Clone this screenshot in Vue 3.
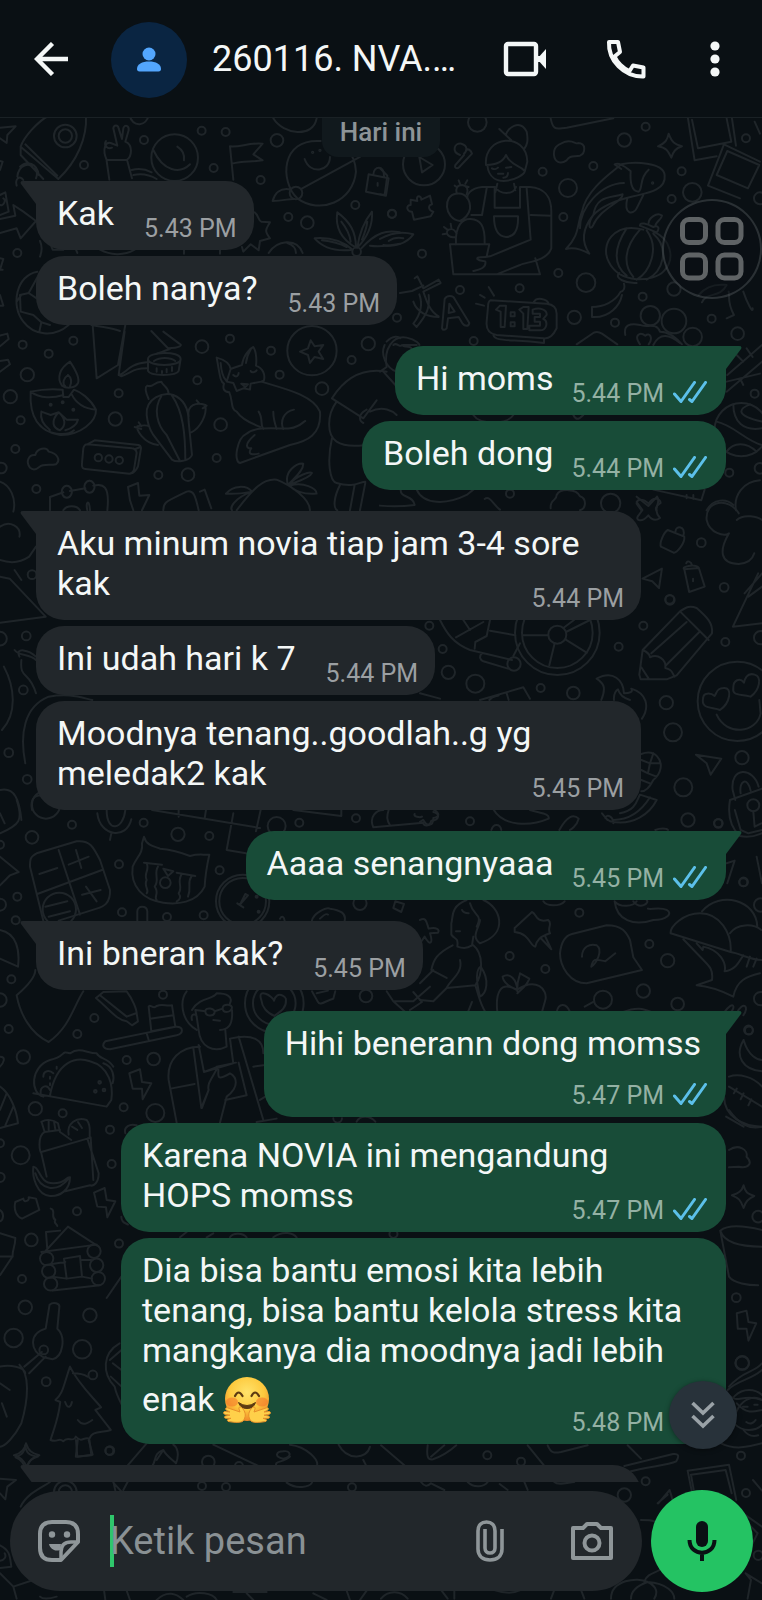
<script setup>
import { ref } from 'vue'

const draft = ref('')

const groups = [
  {
    side: 'in',
    items: [
      { text: 'Kak', time: '5.43 PM', fit: 'row' },
      { text: 'Boleh nanya?', time: '5.43 PM', fit: 'row' }
    ]
  },
  {
    side: 'out',
    items: [
      { text: 'Hi moms', time: '5.44 PM', fit: 'row' },
      { text: 'Boleh dong', time: '5.44 PM', fit: 'row' }
    ]
  },
  {
    side: 'in',
    items: [
      { text: 'Aku minum novia tiap jam 3-4 sore kak', time: '5.44 PM', fit: 'tucked' },
      { text: 'Ini udah hari k 7', time: '5.44 PM', fit: 'row' },
      { text: 'Moodnya tenang..goodlah..g yg meledak2 kak', time: '5.45 PM', fit: 'tucked' }
    ]
  },
  { side: 'out', items: [{ text: 'Aaaa senangnyaaa', time: '5.45 PM', fit: 'row' }] },
  { side: 'in', items: [{ text: 'Ini bneran kak?', time: '5.45 PM', fit: 'row' }] },
  {
    side: 'out',
    items: [
      { text: 'Hihi benerann dong momss', time: '5.47 PM', fit: 'below' },
      { text: 'Karena NOVIA ini mengandung HOPS momss', time: '5.47 PM', fit: 'tucked' },
      {
        text: 'Dia bisa bantu emosi kita lebih tenang, bisa bantu kelola stress kita mangkanya dia moodnya jadi lebih enak',
        hug: true,
        time: '5.48 PM',
        fit: 'tucked'
      }
    ]
  },
  { side: 'in', items: [{ text: '', time: '', fit: 'tucked' }] }
]

/* Wallpaper: each patch has its own origin and scale, with bubbles [x, y, r] and line art */
const third = 'scale(0.3333)'
const patches = [
  {
    at: `translate(0 115) ${third}`,
    dots: [[605, 47, 12], [677, 51, 12], [432, 75, 12], [252, 150, 12], [831, 76, 19], [641, 159, 12], [782, 195, 12], [1066, 270, 12], [865, 306, 12], [922, 323, 19], [1176, 297, 12], [52, 414, 12], [68, 689, 12], [220, 677, 12], [146, 716, 12], [82, 779, 20], [31, 845, 20], [356, 835, 12], [346, 912, 20], [62, 916, 12], [46, 1002, 12], [606, 695, 19], [690, 671, 12], [592, 796, 12], [813, 707, 12], [839, 779, 12], [966, 821, 19], [662, 929, 19], [650, 1029, 12], [475, 1080, 12], [564, 1079, 19], [109, 1122, 12], [1105, 686, 20], [1055, 735, 12], [196, 63, 34], [196, 63, 20], [524, 128, 70], [888, 234, 19], [936, 707, 74], [295, 1028, 11], [327, 1032, 11], [358, 1036, 11], [1070, 410, 13], [152, 869, 3], [188, 862, 3], [220, 884, 3], [938, 112, 2], [960, 106, 2], [4, 1059, 16]],
    lines: [
      'M0 38 47 34 22 60 20 84 0 70M0 138 8 140 0 165',
      'M62 95C70 70 110 20 150 0M258 0C262 70 230 140 175 192M62 95 175 192M76 88 172 182M62 95V120L130 192M60 155C80 135 112 145 116 180M52 185C55 150 90 140 100 160 118 165 108 190 108 190M50 212C44 190 60 180 70 195',
      'M320 135C305 100 318 80 332 84L352 92 340 40C342 28 354 30 356 40L366 72 370 40C374 26 388 32 386 46L376 80C400 90 396 125 380 135H325ZM318 78C310 90 322 104 336 98M320 138 328 194M382 138 396 190M395 165C420 158 440 164 455 172M400 180C425 175 450 180 470 192',
      'M460 105C490 170 540 178 570 148M532 95C548 105 554 120 552 136M388 0C400 40 440 34 446 0',
      'M690 94 700 194M690 94C720 98 745 82 788 86L760 118 788 136C750 142 730 136 696 146',
      'M962 78C840 70 840 200 892 250 960 300 1060 260 1068 170 1066 140 1056 120 1046 112M904 222 1080 126M874 224C840 216 824 236 818 258 850 258 870 250 882 252M914 132C930 180 990 170 990 126M820 10C850 60 940 70 950 10',
      'M1106 178 1166 190 1158 242 1098 230ZM1120 180C1120 150 1156 150 1152 186M1133 204V212',
      'M1068 398C1020 370 1006 330 1012 292 1050 320 1068 350 1068 398ZM1072 398C1080 340 1100 310 1116 290 1120 330 1100 370 1072 398M1058 404C1010 410 970 400 944 370 990 366 1030 380 1058 404M1084 400C1130 350 1160 345 1200 352M1110 392C1140 396 1170 392 1200 386M1024 320C1040 340 1050 360 1052 380M1102 320C1100 340 1092 360 1086 374M966 376C1000 380 1020 386 1040 396',
      'M0 240 16 232 26 290 0 300M0 312 46 302 40 270 70 290 108 318 62 370 50 340 0 354M10 250C20 255 10 275 0 270',
      'M764 292C776 300 774 316 784 320L810 322C800 340 790 345 810 370L780 378 776 406 752 388 730 410 726 396',
      'M806 414C830 376 890 366 908 414M862 384C880 390 888 400 888 414M120 378C130 400 124 414 120 425M150 384 158 404H190M228 404 232 414M300 404C330 420 370 424 404 404M552 404V416M660 402V416',
      'M112 470C50 480 30 570 70 620 100 660 160 670 206 630M116 480 86 534 60 540 62 590 100 600 124 622 118 650M86 534 110 550M124 622 150 630M64 540 50 560M0 430 10 432 0 464 8 464M0 540 10 572 0 572',
      'M278 630 290 790 354 750 376 630M274 630C330 640 340 640 360 648M374 650 356 780 364 784C400 770 400 760 442 760M356 780C380 776 380 748 440 742M454 648 504 700C540 700 550 690 538 686L490 650M510 702C480 712 490 710 470 716',
      'M444 732C444 710 540 706 542 732 542 756 444 756 444 732V768C450 784 530 784 536 768L542 732M462 738C480 726 510 726 526 738M470 760V770M500 762V772M486 768V774M516 756V768',
      'M0 662 22 656 26 672 0 694M0 738 24 734 30 748 0 770',
      'M210 740C230 770 240 790 234 804 226 820 200 822 186 812 170 790 178 760 210 740ZM204 780C190 790 186 804 196 814M204 780C216 790 216 800 210 814',
      'M92 830C88 900 110 950 180 960 240 962 290 920 288 884 270 850 240 830 222 824L206 846H190L188 824C150 820 110 826 92 830ZM92 830C120 852 160 850 190 840M214 836C230 870 260 882 288 884M124 890C120 910 130 930 150 945M124 890 152 900 176 892 200 914 234 914M176 892C150 920 160 940 180 946 200 930 196 910 176 892M234 914C230 930 214 940 196 946M120 930C140 958 200 966 222 946',
      'M90 1058C76 1040 86 1018 106 1020 110 1000 140 994 146 1010 170 1014 184 1034 168 1048 150 1052 130 1046 118 1056 106 1066 96 1064 90 1058',
      'M262 988C256 988 252 992 250 1000L246 1044C244 1060 250 1062 256 1062L388 1076C396 1076 400 1070 402 1064L410 1014C410 1004 400 1000 396 1000L262 988M262 988 284 976 416 990C424 992 424 1000 422 1006L414 1054C412 1062 406 1068 398 1074M406 1002 422 996',
      'M440 900C436 850 490 830 520 840 560 856 566 890 566 920L576 1020C570 1038 530 1044 516 1034L460 960C446 940 442 920 440 900ZM484 844C460 880 470 930 500 960L540 1038M516 842C550 890 556 960 556 1036M446 852C436 830 434 816 442 812 460 820 460 800 484 800 490 816 504 812 506 836M566 904C560 870 590 860 616 870 622 900 600 940 574 952M474 990C430 986 406 940 412 934 430 930 440 930 448 934M590 856 598 866M620 872 608 880M404 936 424 942M416 922 424 934',
      'M650 728C660 780 660 800 672 806 668 820 670 830 688 832 700 860 690 880 710 890 730 920 770 930 780 936M650 728C680 736 690 750 692 762 710 756 720 752 726 750 730 720 750 700 760 696 770 710 770 740 768 752 790 760 796 780 792 796L784 800C850 820 940 840 960 890 966 960 920 980 870 990L720 1044C700 1040 710 970 740 956 770 930 850 944 870 940 900 936 910 920 916 918M662 744C664 770 672 790 678 796M738 744C740 720 752 704 754 700M692 762 680 800 700 804 710 828 730 820 750 824 752 806 784 800M700 780C710 790 716 780 716 774M752 768C756 776 768 770 770 766M724 806 744 808 736 816ZM776 890C790 910 780 930 790 942M820 890C820 910 826 930 830 942M882 884C850 890 840 920 850 942M764 960C730 990 740 1000 754 1000 740 1020 760 1020 776 1016',
      'M932 676 944 694 970 690 956 710 970 732 944 726 930 744 924 720 900 710 924 700Z',
      'M996 850C1040 780 1100 760 1160 770M996 850 1090 910 1130 856M996 850 1010 860C980 900 980 960 1010 980 1040 1000 1090 990 1100 990M1100 884C1070 900 1080 920 1090 924M1110 890C1150 870 1180 890 1190 900M996 970C980 1040 990 1100 1010 1104 1060 1120 1080 1100 1096 1100M1154 690C1140 720 1160 760 1190 770M1160 680C1180 660 1196 664 1200 670M1020 1110C1000 1150 1000 1180 1012 1186M1064 1110 1050 1186M1096 1104 1080 1186',
      'M0 1100C30 1110 50 1150 40 1190M150 1146 190 1132M210 1128 256 1120M280 1112C310 1104 330 1114 322 1186M150 1146V1186M190 1186C200 1170 230 1170 240 1186M262 1186C256 1160 268 1150 270 1186',
      'M200 1112A15 18 0 1 0 201 1112M268 1097A15 18 0 1 0 269 1097M384 1116 414 1104 418 1142 448 1140 426 1186M384 1116 390 1156 400 1186',
      'M490 1186C490 1160 500 1160 560 1130 580 1124 586 1140 596 1186M600 1130 614 1124 634 1180',
      'M678 1136C700 1110 740 1110 756 1130 700 1140 690 1136 678 1136M756 1130C700 1150 690 1180 696 1186M710 1186C760 1120 790 1090 830 1094 870 1110 930 1150 930 1186M864 1110C850 1070 890 1044 910 1046 910 1070 880 1090 864 1110M866 1110C890 1080 930 1070 936 1074 930 1090 890 1100 866 1110M870 1112C910 1100 950 1120 950 1136 910 1140 880 1126 870 1112'
    ]
  },
  {
    at: `translate(380 115) ${third}`,
    dots: [[292, 22, 28], [733, 75, 20], [797, 35, 12], [1098, 70, 12], [640, 153, 12], [905, 169, 12], [488, 170, 12], [564, 219, 27], [550, 306, 12], [875, 252, 12], [937, 232, 28], [36, 296, 12], [126, 416, 12], [535, 474, 12], [618, 503, 28], [240, 525, 12], [419, 520, 12], [788, 545, 12], [882, 522, 20], [583, 607, 20], [705, 623, 12], [51, 608, 12], [811, 602, 29], [882, 618, 37], [938, 666, 28], [995, 611, 12], [1073, 656, 19], [281, 678, 12], [1124, 836, 12], [1048, 1073, 12], [390, 1136, 12], [692, 1165, 29], [132, 148, 63], [1084, 944, 80], [818, 204, 2], [1140, 250, 18], [1140, 1060, 16]],
    lines: [
      'M118 126 158 150 126 172ZM240 120C214 110 222 84 244 86 266 92 260 110 252 116M252 120 228 148C220 156 230 164 238 156L276 116C272 104 264 100 258 106',
      'M378 60C380 40 420 10 440 50 446 80 440 90 434 100M358 42 394 76M318 150C310 60 440 50 442 140L434 170C428 190 330 230 322 150M318 150C350 150 370 140 378 120 390 150 420 152 432 166M336 160C342 164 350 162 354 158M378 158 394 156M354 176H370M384 174C384 186 376 188 370 188M352 206 346 232M402 206 406 226M346 216C360 240 400 240 408 216',
      'M306 216C270 220 260 240 262 250M320 220 306 300M306 216H344V278H420V216H450C500 220 514 250 514 290V400C500 440 440 440 420 450L350 478M440 220 452 374 330 424C300 430 290 424 292 432 300 440 316 436 316 440 320 460 296 464 280 468M342 304H414C416 350 400 366 378 366 350 364 342 340 342 304M452 300 514 302M274 300H306M466 430 480 478H220L210 388H328L320 424',
      'M228 388C224 330 250 310 272 312 300 314 316 330 314 386M240 318C190 310 190 240 228 236 260 230 272 260 270 282 266 300 256 310 240 318M230 236C226 220 232 210 246 210 262 212 266 224 260 238M236 196 240 206M262 196 256 206M266 216 260 214M224 212 230 216M226 366C200 370 196 350 206 344 222 338 226 350 230 356M192 336 202 344M212 326 214 338M188 358 198 356',
      'M92 254 112 258C106 240 124 240 124 254L150 242 156 268C140 272 148 288 160 290L152 304 102 314 96 290C80 290 76 270 92 270Z',
      'M0 372C40 350 70 350 100 358 80 386 40 398 10 390M26 378C40 368 60 368 70 370M0 160 22 182 14 240 0 238',
      'M522 120C520 90 540 88 556 80 580 74 590 90 594 84 620 84 616 116 600 122 580 126 570 120 560 136 540 150 524 140 522 120',
      'M866 56C876 84 886 88 906 94 886 100 880 110 874 128 864 108 860 98 834 94 856 84 862 76 866 56ZM924 10 944 136 1010 124M936 14 954 100 1054 80 1040 10M1056 10 1068 92M1032 88 984 212 1080 250M1032 88 1140 140M1042 108 1010 180 1104 220 1138 150ZM1124 20 1140 56',
      'M724 148C760 140 850 140 854 180 860 230 790 236 760 244 690 260 660 280 640 300 600 350 610 390 628 416 600 400 580 396 558 402 600 360 590 330 606 290 620 220 700 170 724 148ZM724 162 704 148C720 140 740 160 752 168 750 200 754 230 776 230 790 220 776 190 806 164M600 340C600 280 660 206 732 204M640 300C650 240 690 250 728 238 730 260 660 280 640 330 630 350 620 330 640 300M742 250C730 300 760 300 770 280L790 240M512 10C520 50 530 40 560 38L700 10',
      'M790 344C700 320 660 390 686 440 720 510 820 500 850 470 890 430 870 370 820 350M740 340C700 400 700 450 740 482M780 344C730 400 730 450 760 486M800 346C840 400 810 470 770 494M820 356C870 400 850 470 800 494M780 332 830 352C840 340 836 330 820 336 800 326 780 320 780 332M806 324C806 310 830 290 846 302 844 316 826 320 826 334M718 474C700 490 740 506 770 504M732 506C736 520 730 530 722 530 706 560 670 576 636 576V606C690 610 720 570 726 540',
      'M104 490 112 484 130 520 176 494 182 504 130 530C140 560 150 590 176 604M60 534 96 528 130 512M118 538C130 570 120 600 100 626L110 636C140 600 150 580 146 540M100 560C110 590 140 606 176 606M186 640 194 552C200 540 220 540 224 552L268 624C266 636 254 634 248 626L236 606 204 610 200 640C196 646 188 646 186 640M206 594 208 566 224 590ZM300 540 314 548M288 566 312 572M326 516 342 542',
      'M332 556 500 566C520 568 530 580 530 596V640C520 660 510 672 490 670L350 660C326 656 318 640 320 620L324 576C324 562 326 558 332 556ZM462 560C470 546 500 550 506 566M340 660C346 680 380 672 492 684V672M348 584 360 572H378L374 636H362V590ZM392 592H404V604H392ZM392 622H404V634H392ZM418 584 430 576H446L442 642H430V596ZM458 584C480 576 502 584 500 600L490 612C506 620 500 646 480 646H448V632H480V620H464V606H480V596H458Z',
      'M590 688 640 654C650 648 660 652 666 656L712 688M736 660C730 630 750 624 780 630 800 640 830 620 840 650 870 650 890 670 906 688M780 688C760 660 780 650 796 662 810 650 820 670 806 688M820 690C840 650 870 660 900 684M1040 610 1062 600C1040 560 1050 540 1046 530M1090 530C1100 560 1120 600 1118 580M956 540C990 500 1030 510 1040 510 1020 550 980 530 966 562M1042 780 1146 690M1040 830 1146 740M1070 720 1090 740M1100 700 1118 726M1080 790 1090 810M1040 800 1140 776',
      'M20 756C10 700 40 660 80 668 110 674 120 690 118 690M40 690C50 680 60 700 66 690 76 700 90 690 94 700M0 770 20 756M10 770 46 810M70 690H110',
      'M1010 920C1060 930 1100 980 1146 990M1060 868C1060 920 1090 950 1146 940M1110 868C1080 880 1060 900 1146 920M1040 1010C1060 980 1100 980 1130 1010',
      'M62 1124C60 1150 100 1140 104 1170 60 1176 20 1174 0 1172M110 1124C130 1170 200 1170 260 1140L280 1124M314 1152C330 1140 340 1170 360 1184M512 1180C510 1150 530 1160 530 1140 540 1120 590 1120 600 1144 620 1150 620 1180 600 1186M820 1124 964 1156 974 1124M920 1140V1150M940 1140V1152M770 1166C770 1150 790 1150 806 1166 820 1144 840 1150 842 1164 826 1174 826 1184 830 1186M770 1166 784 1186M1068 1186C1060 1140 1090 1100 1140 1096M980 1186C1000 1150 1040 1150 1060 1170M280 900C300 930 380 930 400 900M580 900C590 920 600 910 610 900'
    ]
  },
  {
    at: 'translate(0 500) scale(0.486 0.3333)',
    dots: [],
    rings: [[1443, 128, 9], [1490, 262, 9], [1378, 298, 9], [54, 408, 9], [48, 570, 9], [18, 758, 9], [56, 838, 9], [66, 224, 9], [0, 416, 14]],
    lines: [
      'M1310 -10 1334 18 1352 -10M1352 -10C1362 10 1340 24 1358 54 1344 70 1334 46 1334 46 1320 70 1308 60 1312 50L1322 30 1310 6',
      'M1374 90 1408 110C1410 130 1392 160 1386 158L1360 140C1356 130 1366 96 1374 90M1390 94C1390 76 1412 76 1406 108',
      'M1408 208 1438 204 1450 260 1418 276ZM1408 208C1400 200 1430 190 1438 204M1412 190C1414 180 1422 184 1424 196M1426 236V244M1322 236 1362 206 1356 264 1342 244Z',
      'M1520 40C1500 -10 1450 0 1454 60 1460 100 1490 110 1500 100 1480 150 1480 190 1520 192 1545 190 1550 170 1552 160M1516 60C1530 40 1560 50 1568 60M1560 220 1508 380 1568 370M1532 280 1568 220M1540 290 1568 260',
      'M0 80C20 60 44 80 40 110M0 180C20 190 40 190 60 170L74 140M0 230 20 236 94 350 0 368M30 210 44 240M8 500C30 560 36 640 4 690M52 790C40 700 50 620 100 590 140 580 160 590 190 600M74 580C60 510 40 540 44 480M40 470C30 440 60 450 74 470M30 450C40 470 60 460 74 480M0 870C30 860 40 900 44 960M66 930C60 890 80 880 86 890'
    ]
  },
  {
    at: `translate(420 600) ${third}`,
    dots: [[28, 77, 12], [68, 147, 12], [85, 217, 20], [166, 251, 27], [362, 264, 12], [460, 279, 19], [670, 77, 12], [596, 140, 12], [916, 126, 12], [739, 308, 20], [759, 397, 27], [966, 473, 20], [790, 562, 27], [804, 660, 20], [895, 670, 12], [150, 664, 12], [970, 847, 12], [478, 938, 12], [269, 1068, 12], [376, 1107, 12], [688, 1032, 12], [743, 1082, 20], [670, 1173, 20], [773, 1212, 19], [549, 1199, 27], [987, 1292, 12], [1022, 113, 20], [1022, 1196, 20], [1022, 915, 20], [412, 104, 27], [412, 98, 127], [412, 98, 106], [282, 192, 20], [952, 304, 119], [1000, 616, 18], [750, 0, 14]],
    lines: [
      'M310 106H384M438 96 510 60M436 118 500 158M404 130 388 196M430 84 462 60M60 60C80 100 100 130 150 150L276 180M130 60 150 90M210 60 200 108 166 126 164 146M108 112 190 66M210 92 286 106M280 168 300 130M186 160C176 170 180 180 190 184L264 206',
      'M780 34C800 20 810 16 830 24 860 50 880 70 876 100L770 226 740 238H662L658 224 668 150ZM780 34 866 120M800 66 694 160M838 96 736 198M668 150C690 160 690 170 690 172 714 160 740 180 736 204 760 210 756 220 764 230M664 202 686 236',
      'M850 292C840 330 880 320 900 330 930 310 940 260 910 264 890 264 890 280 884 288 870 276 850 280 850 292ZM940 262C936 290 960 280 992 290 1020 270 1026 230 1004 224 980 216 974 240 972 248 960 232 940 240 940 262ZM890 344C920 410 1010 400 1022 340 1020 330 1020 310 1018 300',
      'M544 300C560 260 550 250 530 236 580 210 610 240 612 280 630 280 640 276 634 266 680 280 690 320 666 356M582 300C580 280 590 270 594 268 600 290 616 296 630 300M180 300 310 262 330 296M208 300C220 286 230 290 236 286M260 280 266 300M0 280 60 296',
      'M664 462C680 456 700 456 712 470 730 490 724 520 700 540 690 560 680 574 664 574M664 480 690 490 684 520 664 510M690 490 720 490M684 520 710 530M664 540 690 550M700 460 690 490M600 640C650 630 650 600 660 584L710 600C690 640 640 680 570 664L556 654C560 640 580 650 580 670M580 660C620 660 660 640 690 592M546 640 562 660',
      'M828 464 904 476 872 524 860 490ZM938 570C930 500 1000 500 1016 560M938 570 946 600M962 580C956 540 984 530 992 572M930 600C920 660 940 690 960 708 1000 716 1020 700 1026 700M930 600 1026 566M1000 634 1004 680 1024 670',
      'M220 628C250 680 330 680 386 656 390 640 360 640 330 630M418 690C440 650 460 640 476 656 470 680 450 690 450 690M40 628C60 640 60 650 40 654 40 680 20 680 10 660L0 666M214 690C220 670 240 670 244 690M706 690C720 684 740 684 744 690M920 790 944 782 922 850M1010 770 1026 850M584 904C590 960 640 980 700 960 740 960 760 940 740 930 720 920 690 930 684 926M584 904C600 924 640 920 650 904M640 904C660 930 690 910 680 900M370 904C380 920 420 920 434 904',
      'M140 900C90 920 100 950 94 970V1004C104 1020 116 1010 112 1040 140 1050 150 1040 156 1036L160 1010M126 930C130 940 140 940 146 940M150 910C160 950 190 940 170 980M190 900C240 920 270 1000 180 1030 150 1010 180 980 180 960M108 994H120M98 1036C50 1060 40 1080 34 1110L80 1134M120 1080C130 1120 90 1140 80 1164L166 1156C190 1120 190 1060 160 1036M182 1100C210 1140 200 1180 180 1190 170 1150 166 1110 182 1100M166 1156C180 1200 180 1210 196 1236M80 1164 40 1204 0 1200M156 1206 144 1236M0 1150 40 1110',
      'M0 960C20 950 20 970 26 986 50 980 60 990 54 998L30 1000C40 1030 30 1040 14 1010L0 1030M284 984 336 936C350 940 346 970 384 960 400 970 380 984 390 1000 360 1010 350 1020 346 1040 330 1040 330 1000 284 996ZM362 1014 394 1048 M374 1006 392 1044',
      'M290 1170C240 1140 226 1180 232 1236M290 1170C350 1130 384 1170 376 1200L366 1236M248 1130C270 1116 290 1140 292 1170 270 1160 250 1150 248 1130ZM292 1174C290 1140 300 1130 300 1120L328 1136C320 1160 300 1170 292 1180',
      'M456 1002 560 976C610 976 620 1000 630 1020L640 1072 666 1110 500 1150C450 1150 420 1100 420 1060 424 1020 440 1006 456 1002ZM486 1070C486 1040 510 1030 530 1036 550 1050 530 1090 514 1100 520 1070 530 1080 556 1084L586 1060',
      'M752 1000C750 980 790 940 840 940 900 940 936 1000 932 1056L752 1000M846 934C900 870 1010 900 1012 980M930 1000C950 970 1000 970 1024 990M932 1056C960 1060 990 1080 1026 1080M790 1018 850 1080C870 1100 880 1110 876 1140L830 1156C880 1160 920 1180 940 1190 950 1140 980 1130 1020 1120M830 1030 848 1050 850 1040C900 1050 920 1090 914 1114 950 1110 960 1080 970 1066M980 1100 990 1070M1000 1100 1010 1076',
      'M410 1236C416 1206 440 1210 450 1236M494 1220 520 1206M610 1236C650 1220 670 1226 694 1236M914 1236C940 1200 950 1220 930 1240M950 1240C970 1200 990 1220 970 1246'
    ]
  },
  {
    at: `translate(0 800) ${third}`,
    dots: [[216, 74, 12], [96, 112, 19], [431, 68, 12], [534, 103, 20], [628, 108, 12], [357, 193, 12], [659, 211, 12], [52, 290, 12], [47, 361, 12], [366, 337, 12], [501, 351, 12], [611, 346, 12], [830, 78, 27], [898, 68, 12], [1068, 55, 12], [34, 538, 12], [26, 687, 12], [283, 654, 12], [232, 702, 12], [70, 771, 20], [489, 584, 12], [380, 780, 12], [461, 777, 19], [371, 922, 12], [106, 926, 20], [188, 940, 12], [466, 939, 27], [330, 989, 12], [62, 1066, 27], [335, 1092, 12], [231, 1234, 12], [94, 1320, 19], [357, 1331, 12], [66, 1437, 12], [1098, 588, 19], [1080, 310, 20], [138, 14, 42], [728, 304, 80], [728, 304, 70], [178, 328, 50], [823, 610, 88], [823, 610, 64], [140, 1376, 20], [146, 1414, 20], [152, 1452, 20], [282, 1354, 20], [290, 1396, 20], [295, 1436, 20], [770, 290, 3], [776, 335, 3], [299, 847, 4], [286, 874, 4], [312, 870, 4], [496, 248, 16], [0, 600, 20], [0, 314, 18], [0, 134, 12], [0, 1132, 14], [0, 1030, 12]],
    lines: [
      'M50 0C70 60 60 74 0 100M0 170 56 216 30 226 16 240 0 256M292 40C300 110 380 120 394 58M320 30C320 100 370 90 376 30M334 100 330 120M0 40 14 70',
      'M90 200C90 180 90 170 110 160L230 124C270 120 280 140 300 180L330 270C332 310 310 320 290 326L176 362M90 200 130 362M176 150 240 344M112 282 306 210M118 222 172 204M206 194 266 170M228 150 244 204M246 284 302 270M258 260 290 304M136 320 202 304M146 350 210 334',
      'M432 110C440 140 470 140 480 146 520 148 550 160 570 168 600 160 610 166 628 164 620 200 616 220 614 260 590 310 530 314 490 308 430 300 390 260 398 200 410 170 430 160 426 130ZM432 188 486 194M440 190C450 210 430 220 440 240 430 260 450 270 440 280M474 200C460 220 480 240 464 260 480 280 460 290 470 300M530 218 586 228M544 224C530 250 550 260 536 280 544 290 540 300 530 304M574 230C560 250 576 260 564 290M490 206 520 214 504 228Z',
      'M720 314 744 286 736 282ZM712 310 730 322M680 150 700 40M680 150 738 160M782 30 768 94M456 30 780 84M536 30V50M618 30 614 56M880 30 1024 48V30M1120 82C1106 50 1130 30 1150 30M1166 30C1160 50 1160 60 1170 76M1120 82 1270 68C1270 80 1290 80 1294 62 1320 60 1320 40 1300 36M1244 42C1240 50 1260 54 1266 50',
      'M412 362V334C412 316 440 316 442 334V362M936 362C940 340 980 320 990 326 1020 330 1040 340 1034 362M960 356C970 346 980 340 984 344M840 356C846 346 852 350 854 362M1180 324 1186 304 1212 312 1204 336Z',
      'M0 390C50 400 60 450 54 500L0 476M50 586C60 640 90 700 146 726 210 680 220 620 250 574M50 586C80 560 106 530 106 510',
      'M288 594 310 576 380 574C400 600 410 630 410 640L414 664 396 676 380 664C350 660 330 630 288 594M300 586 380 650 408 640',
      'M446 620C450 610 460 630 470 618 490 610 496 620 516 616L526 680 454 694ZM450 656 520 646M316 724 530 680C550 680 552 700 530 706L330 748C310 748 304 736 316 724ZM440 700 446 720',
      'M130 890C90 880 90 800 150 780 200 770 180 750 210 760 240 740 260 760 290 760 300 780 320 770 340 800M150 886C170 780 230 770 270 784 330 800 340 860 334 900L320 920 100 880M130 830C130 810 150 810 160 820M122 880C120 860 140 850 150 870M150 830V836M170 800V806M150 850V856M310 790C340 800 344 830 338 850',
      'M388 820 420 808 426 846 454 850 428 898 426 866H398ZM282 1178 314 1164 320 1200 346 1204 322 1252 318 1222 292 1220Z',
      'M590 690C540 660 540 600 560 574M576 660C570 640 590 640 590 650L596 690C600 740 640 760 680 740L676 690M576 630C600 590 640 600 650 580 680 580 700 590 690 610M590 650 586 630 616 634M616 634C616 620 646 624 644 638 640 650 616 650 616 634M668 624C670 610 696 612 696 624 690 640 668 640 668 624M644 634 668 626M640 660 660 662M696 630C700 680 680 690 660 690M596 735 612 816 700 790 690 716M600 740C540 740 500 780 506 840L530 968M512 866 584 852M580 744 604 924 626 870M612 816 654 800C640 830 620 850 626 870L606 924M654 800C660 820 640 850 690 820 710 830 720 860 680 890L660 968M716 788 740 886 676 900M690 716C760 700 790 720 790 760M716 710 790 960M650 800 708 788M760 800 790 796M780 900 796 890M770 966 830 956',
      'M784 600C770 560 820 590 822 602 830 570 860 590 858 600 860 630 830 640 824 648 800 640 786 620 784 600ZM936 574 954 606C960 620 980 600 1000 596L1006 574M950 580 984 572M1160 574 1180 604H1240L1290 560M1180 604 1220 640M1240 576 1266 606 1230 630',
      'M124 966C140 956 160 960 174 970L180 996M126 970 134 996 180 990M146 964V990M162 964 166 988M134 996C110 1010 120 1060 124 1060L140 1130M180 996 214 1020M206 1004C200 970 230 950 260 960 276 980 266 1000 270 1014M216 980 232 990M234 966 246 984M124 1056 262 1016 296 1120C296 1150 280 1160 270 1156L196 1174M262 1016 272 1012 280 1140M100 1100C120 1100 116 1150 160 1150 200 1150 196 1130 210 1132 210 1170 180 1190 150 1188 110 1184 96 1130 100 1100ZM106 1120C120 1170 170 1180 206 1136',
      'M46 1206 70 1196C72 1212 90 1200 86 1192L108 1196 118 1230 66 1256C50 1250 40 1230 46 1206ZM152 1226C170 1230 150 1250 166 1260 160 1270 170 1270 172 1278M0 1230C14 1240 10 1260 0 1264',
      'M136 1354 204 1280 290 1336M142 1350 138 1296 180 1292M124 1356 290 1334M156 1392 196 1386M156 1430 200 1436M158 1472 300 1456M192 1376 240 1368 246 1430 200 1436ZM246 1380 274 1380M246 1430 276 1436M0 1300 46 1314C46 1340 36 1350 38 1370H0M36 1372 0 1426M320 1494 364 1430',
      'M0 860C30 880 50 930 54 970L0 984M20 880 0 930M40 920 16 976M0 770C20 770 10 790 0 800M376 1000C370 980 390 970 410 976M364 1250C364 1270 380 1270 384 1274M540 1312 560 1296M620 1312 640 1300M690 1312C700 1296 730 1300 740 1312M820 1312C850 1290 880 1300 890 1312M1180 1290A12 12 0 1 0 1181 1290M1000 955A12 12 0 0 0 1026 955M1070 965C1080 945 1110 945 1126 965'
    ]
  },
  {
    at: 'translate(0 1110) scale(0.486 0.3333)',
    dots: [],
    rings: [[52, 592, 14], [185, 616, 14], [28, 684, 19], [169, 718, 19], [191, 795, 9], [95, 815, 9], [226, 1022, 9], [1515, 563, 9], [1527, 760, 14], [90, 720, 9], [1560, 320, 12]],
    lines: [
      'M102 584C110 574 124 580 122 592L118 656C136 680 130 740 108 748L90 742C60 720 60 670 94 656ZM94 740 60 790M86 726 50 770M40 764C60 790 60 860 44 940 30 980 10 1010 0 1010M0 770C20 764 50 770 52 790M0 820 20 840M4 880 14 920',
      'M144 770C130 830 130 850 114 870L124 876C120 930 110 960 104 990 120 1000 120 980 130 994 140 976 150 1000 156 980 170 1000 170 980 184 986 190 960 210 970 228 960L196 900 208 892C190 860 160 820 144 770ZM160 990 156 1040 188 1036 184 990M134 876C140 900 146 890 148 876M160 930C170 950 180 940 190 930M180 800C170 790 160 790 150 790',
      'M246 700C210 730 210 790 236 830 240 860 250 880 256 900M232 760 250 780M228 800 250 830M226 750 250 720M52 1006C54 1030 60 1036 78 1040 60 1048 58 1060 54 1080 48 1060 44 1048 32 1042 48 1034 50 1024 52 1006Z',
      'M1530 226C1534 250 1540 252 1552 258 1540 266 1534 274 1530 294 1524 270 1520 264 1506 256 1520 250 1526 244 1530 226ZM1500 120C1520 100 1540 120 1536 140 1550 160 1540 176 1520 170L1500 172M1482 362C1500 340 1540 350 1568 360M1482 362C1490 400 1530 410 1568 410M1482 362 1500 500C1510 520 1540 526 1560 526M1516 610 1536 602 1540 636 1556 640 1540 692 1536 656H1518ZM1500 830C1530 780 1550 790 1568 760M1508 940C1520 850 1560 860 1568 870M1516 880C1540 920 1560 900 1568 900M1530 960C1540 980 1550 980 1560 976M1500 0C1520 40 1540 60 1568 50'
    ]
  },
  {
    at: 'translate(0 810) scale(0.486 0.3333)',
    dots: [],
    rings: [[1540, 660, 9], [1530, 216, 9], [1478, 40, 9]],
    lines: [
      'M1530 690C1510 740 1530 780 1568 784M1530 690C1540 740 1560 750 1568 750M1500 800C1520 790 1550 800 1568 830M1490 860C1490 920 1530 950 1568 950M1500 830 1568 890M1510 850 1516 836M1524 868 1530 850M1540 886 1546 868M1494 920 1530 950M1512 0 1524 60 1540 70 1568 60'
    ]
  },
  {
    at: `translate(0 1440) ${third}`,
    dots: [[328, 32, 12], [625, 66, 19], [717, 78, 12], [606, 138, 12], [678, 141, 12], [1056, 142, 12], [196, 156, 34], [196, 156, 20]],
    lines: [
      'M78 10C86 34 96 40 118 46 94 54 88 62 80 80 70 60 62 52 42 46 64 40 74 30 78 10ZM228 0 232 50 278 44 266 0M380 80 440 10M456 80C470 60 460 40 490 30 500 50 520 60 528 70 540 40 530 20 520 14M490 30 470 60M640 14 780 80M830 80C820 60 850 70 870 50M850 34C870 30 880 50 850 56 820 50 830 34 850 34M870 14C920 20 960 60 950 80M860 128C890 150 930 140 936 128M1016 14C1040 60 1100 60 1110 20M1090 60 1100 80M380 110 340 124 346 152M384 124 370 150M340 128 364 154',
      'M0 116 48 120 22 140 16 178 0 160M62 200C80 160 130 140 150 126M0 316C30 330 30 350 34 380L0 384M14 340C20 350 14 360 0 362M0 400 40 440 50 476M40 440 100 420M120 470C130 480 150 476 170 470M312 450 316 480M380 452 390 480M470 480C500 450 530 460 550 480M560 470C590 450 640 460 650 480M740 460 760 480M700 456H800M940 460 980 480M1040 452 1050 480M1100 452 1080 480'
    ]
  },
  {
    at: `translate(381 1360) ${third}`,
    dots: [[1084, 8, 20], [319, 286, 12], [420, 305, 12], [1080, 287, 12], [794, 364, 12], [730, 405, 20], [1095, 399, 12], [1132, 586, 14], [1104, 150, 60]],
    lines: [
      'M0 256 70 316M140 256C136 290 140 300 156 298 180 290 210 270 226 256M150 290 190 256M440 256 490 318M500 256C510 280 520 280 540 276L620 256M740 256 780 296M730 318 876 282C896 280 894 290 886 304 860 316 800 320 750 334M120 366C130 380 140 380 150 370L190 390M260 366C280 386 310 380 320 366M356 372 380 390M430 366 440 390M520 366C530 376 550 370 580 366',
      'M920 332 1044 314 1066 420M920 332 932 392M930 344 1034 330 1052 400M930 344 938 388M1116 360 1143 392M832 430 866 390 872 410 880 440M860 404 830 430M1066 446 1143 500M1080 470 1130 520 1110 560M780 480C800 480 810 480 820 484M1020 250C1060 270 1100 262 1143 250M1040 90C1070 60 1110 60 1143 30M1050 110C1070 130 1090 100 1143 120M1086 140H1100M1120 134H1130M1096 186C1110 196 1120 186 1124 180',
      'M690 716C690 660 770 650 800 666 860 670 880 700 880 716M790 664C800 640 820 640 836 630M800 666C760 680 750 700 750 716M800 666C830 680 830 700 820 716M1094 640 1143 670M1094 640 1110 660 1100 716M0 716C20 690 60 690 80 716M180 690 200 716M220 690V716M340 690C370 700 400 700 420 690M520 690 510 716M600 690 610 716'
    ]
  }
]
</script>

<template>
  <div class="app">
    <svg class="wallpaper" viewBox="0 0 762 1600" preserveAspectRatio="xMidYMin slice" aria-hidden="true">
      <g v-for="(patch, p) in patches" :key="p" :transform="patch.at">
        <circle v-for="(dot, d) in patch.dots" :key="'d' + d" :cx="dot[0]" :cy="dot[1]" :r="dot[2]" />
        <ellipse
          v-for="(ring, r) in patch.rings || []"
          :key="'r' + r"
          :cx="ring[0]"
          :cy="ring[1]"
          :rx="ring[2]"
          :ry="ring[2] * 1.46"
        />
        <path v-for="(line, l) in patch.lines" :key="'l' + l" :d="line" />
      </g>
    </svg>

    <header class="topbar">
      <button class="icon-btn back" type="button" aria-label="Kembali">
        <svg width="34" height="34" viewBox="0 0 34 34" fill="none" stroke="currentColor" stroke-width="4.400">
          <path d="M34 17H4M18.500 1.500 3 17l15.500 15.500" />
        </svg>
      </button>
      <div class="avatar">
        <svg width="26" height="26" viewBox="0 0 26 26" fill="currentColor" aria-hidden="true">
          <circle cx="13" cy="7" r="6.500" />
          <path d="M1 22c0-5 5-7.500 12-7.500S25 17 25 22c0 1.500-.8 2.500-2.500 2.500h-19C1.800 24.500 1 23.500 1 22Z" />
        </svg>
      </div>
      <h1 class="name">260116. NVA.…</h1>
      <button class="icon-btn video" type="button" aria-label="Panggilan video">
        <svg width="44" height="36" viewBox="0 0 44 36" fill="none" stroke="currentColor" stroke-width="4.400">
          <rect x="3" y="3" width="30" height="30" rx="2" />
          <path d="M34 18 43 8v20Z" fill="currentColor" stroke="none" />
          <path d="M33 15h4v6h-4Z" fill="currentColor" stroke="none" />
        </svg>
      </button>
      <button class="icon-btn call" type="button" aria-label="Panggilan suara">
        <svg width="40" height="40" viewBox="0 0 40 40" fill="none" stroke="currentColor" stroke-width="4" stroke-linejoin="round">
          <path d="M3 3h9l2 10-5.500 4.500C11 23 17 29.500 23.500 32L27 26.500l10.500 2v9C18 38 2 21.500 3 3Z" />
        </svg>
      </button>
      <button class="icon-btn more" type="button" aria-label="Opsi lainnya">
        <svg width="10" height="36" viewBox="0 0 10 36" fill="currentColor">
          <circle cx="5" cy="5" r="4.600" /><circle cx="5" cy="18" r="4.600" /><circle cx="5" cy="31" r="4.600" />
        </svg>
      </button>
    </header>

    <div class="stage">
      <main class="messages">
        <div class="day">Hari ini</div>
        <section v-for="(group, g) in groups" :key="g" class="group" :class="group.side">
          <article v-for="(m, i) in group.items" :key="i" class="bubble" :class="[m.fit, { first: i === 0 }]">
            <svg v-if="i === 0" class="tail" width="16" height="24" viewBox="0 0 16 24" aria-hidden="true">
              <path d="M0 0h13q3.500 0 2 3L0 23Z" fill="currentColor" />
            </svg>
            <p class="text">
              {{ m.text }}
              <svg v-if="m.hug" class="emoji" width="48" height="46" viewBox="0 0 48 46" role="img" aria-label="wajah memeluk">
                <defs>
                  <radialGradient id="hugFace" cx="50%" cy="35%" r="65%">
                    <stop offset="0" stop-color="#ffe36b" />
                    <stop offset="0.600" stop-color="#fdc93d" />
                    <stop offset="1" stop-color="#f0872a" />
                  </radialGradient>
                </defs>
                <circle cx="24" cy="22" r="22" fill="url(#hugFace)" />
                <ellipse cx="9" cy="25" rx="6" ry="4.500" fill="#f4772b" opacity="0.600" />
                <ellipse cx="39" cy="25" rx="6" ry="4.500" fill="#f4772b" opacity="0.600" />
                <path d="M12 19q3.500-7 7.500 0M28.500 19q3.500-7 7.500 0" fill="none" stroke="#5c3a12" stroke-width="2.200" stroke-linecap="round" />
                <path d="M15.500 25.500q8.500 6 17 0-2 6-8.500 6t-8.500-6Z" fill="#5c3a12" stroke="#5c3a12" stroke-linejoin="round" />
                <g fill="#ffd04a" stroke="#e8912a" stroke-width="1" stroke-linejoin="round">
                  <path d="M20 44c3-4 3-8 0-12-1-2-5-3-4 0l1 3-12-4c-2-1-3.500 1-1.500 2.200L7 35l-5-.5c-2 0-2 2.500 0 2.800l5 .9-4.500.8c-1.500.5-1.300 2.300.3 2.300H8l-3 1c-1.200.8-.5 2.300 1 2.300C11 45.500 18 46 20 44Z" />
                  <path d="M28 44c-3-4-3-8 0-12 1-2 5-3 4 0l-1 3 12-4c2-1 3.500 1 1.500 2.200L41 35l5-.5c2 0 2 2.500 0 2.800l-5 .9 4.500.8c1.500.5 1.300 2.300-.3 2.300H40l3 1c1.200.8.5 2.300-1 2.300C37 45.500 30 46 28 44Z" />
                </g>
              </svg>
            </p>
            <div class="meta">
              <time>{{ m.time }}</time>
              <svg v-if="group.side === 'out'" class="ticks" width="34" height="22" viewBox="0 0 34 22" fill="none" stroke="currentColor" stroke-width="3" stroke-linecap="round" stroke-linejoin="round" role="img" aria-label="Dibaca">
                <path d="m1.500 13 6.500 7.500L21.500 1.500M16.500 18.500l2.500 2L32.500 1.500" />
              </svg>
            </div>
          </article>
        </section>
      </main>

      <button class="shortcut" type="button" aria-label="Pintasan">
        <svg width="64" height="64" viewBox="0 0 64 64" fill="none" stroke="currentColor" stroke-width="5">
          <rect x="2.500" y="2.500" width="23" height="23" rx="6.500" />
          <rect x="38" y="2.500" width="23" height="23" rx="6.500" />
          <rect x="2.500" y="38" width="23" height="23" rx="6.500" />
          <rect x="38" y="38" width="23" height="23" rx="6.500" />
        </svg>
      </button>

      <button class="jump" type="button" aria-label="Ke pesan terbaru">
        <svg width="24" height="28" viewBox="0 0 24 28" fill="none" stroke="currentColor" stroke-width="3.600">
          <path d="m1.500 2 10.500 10L22.500 2M1.500 15 12 25l10.500-10" />
        </svg>
      </button>
    </div>

    <form class="composer" @submit.prevent>
      <div class="field">
        <button class="icon-btn" type="button" aria-label="Emoji dan stiker">
          <svg width="42" height="42" viewBox="0 0 42 42" fill="none" stroke="currentColor" stroke-width="4" stroke-linejoin="round">
            <path d="M14 2h14c8 0 12 4 12 12v8L23 40h-9C6 40 2 36 2 28V14C2 6 6 2 14 2Z" />
            <path d="M40 22h-7c-7 0-10 4-10 10v8" stroke-width="3.500" />
            <path d="M11 24h12l-1 6c-6 2-10-2-11-6Z" fill="currentColor" stroke="none" />
            <circle cx="14" cy="14.500" r="3.200" fill="currentColor" stroke="none" />
            <circle cx="29" cy="14.500" r="3.200" fill="currentColor" stroke="none" />
          </svg>
        </button>
        <label class="entry">
          <input v-model="draft" type="text" placeholder="Ketik pesan" aria-label="Ketik pesan" />
        </label>
        <button class="icon-btn" type="button" aria-label="Lampirkan">
          <svg width="28" height="42" viewBox="0 0 28 42" fill="none" stroke="currentColor" stroke-width="3.600">
            <path d="M26 9v20c0 7-5 11-12 11S2 36 2 29V11c0-6 3.500-9 8.500-9S19 5 19 11v17c0 3-2 5-5 5s-5-2-5-5V9" />
          </svg>
        </button>
        <button class="icon-btn camera" type="button" aria-label="Kamera">
          <svg width="42" height="38" viewBox="0 0 42 38" fill="none" stroke="currentColor" stroke-width="4" stroke-linejoin="round">
            <path d="M2 6h10l4-4h10l4 4h10v30H2Z" />
            <circle cx="21" cy="21" r="7.500" />
          </svg>
        </button>
      </div>
      <button class="mic" type="button" aria-label="Rekam pesan suara">
        <svg width="30" height="42" viewBox="0 0 30 42" aria-hidden="true">
          <rect x="9" y="1" width="12" height="26" rx="6" fill="currentColor" />
          <path d="M2.500 20c0 17 25 17 25 0M15 32v9" fill="none" stroke="currentColor" stroke-width="4" />
        </svg>
      </button>
    </form>
  </div>
</template>

<style>
body {
  background: #0a1014;
}
</style>

<style scoped>
.app {
  position: relative;
  display: flex;
  flex-direction: column;
  height: 100vh;
  overflow: hidden;
  background: #0a1014;
  color: #f4f7f7;
  font-family: Roboto, "Liberation Sans", sans-serif;
}

.wallpaper {
  position: absolute;
  inset: 0;
  width: 100%;
  height: 100%;
  fill: none;
  stroke: #1f2529;
  stroke-width: 2px;
  stroke-linejoin: round;
  stroke-linecap: round;
}

.wallpaper circle,
.wallpaper ellipse,
.wallpaper path {
  vector-effect: non-scaling-stroke;
}

button {
  display: flex;
  align-items: center;
  justify-content: center;
  flex: none;
  margin: 0;
  padding: 0;
  border: 0;
  background: none;
  color: inherit;
  cursor: pointer;
}

.topbar {
  position: relative;
  display: flex;
  align-items: center;
  flex: none;
  height: 118px;
  padding: 0 42px 0 34px;
  border-bottom: 1px solid #1a2125;
  box-sizing: border-box;
  background: #0a1014;
}

.avatar {
  display: flex;
  align-items: center;
  justify-content: center;
  flex: none;
  width: 76px;
  height: 76px;
  margin: 2px 25px 0 43px;
  border-radius: 50%;
  background: #0a2542;
  color: #53a6fd;
}

.name {
  flex: 1;
  min-width: 0;
  margin: 0;
  overflow: hidden;
  font-size: 36px;
  font-weight: 400;
  line-height: 44px;
  white-space: nowrap;
}

.call {
  margin: 0 64px 0 59px;
}

.stage {
  position: relative;
  display: flex;
  flex: 1;
  min-height: 0;
}

.messages {
  display: flex;
  flex: 1;
  flex-direction: column;
  gap: 21px;
  min-width: 0;
  overflow-x: hidden;
  overflow-y: auto;
  padding: 0 36px;
  scrollbar-width: none;
}

.day {
  align-self: center;
  flex: none;
  margin-bottom: 3px;
  padding: 0 18px 11px;
  border-radius: 0 0 16px 16px;
  background: #11191d;
  color: #8d9497;
  font-size: 26px;
  font-weight: 500;
  line-height: 28px;
}

.group {
  display: flex;
  flex: none;
  flex-direction: column;
  align-items: flex-start;
  gap: 6px;
}

.group.out {
  align-items: flex-end;
}

.bubble {
  position: relative;
  display: flex;
  box-sizing: border-box;
  max-width: 605px;
  min-height: 69px;
  padding: 12px 17px 8px 21px;
  border-radius: 28px;
  background: #22272b;
  color: #22272b;
}

.out .bubble {
  padding-right: 19px;
  background: #184c38;
  color: #184c38;
}

.in .first {
  border-top-left-radius: 0;
}

.out .first {
  border-top-right-radius: 0;
}

.tail {
  position: absolute;
  top: 0;
  left: 100%;
}

.in .tail {
  right: 100%;
  left: auto;
  transform: scaleX(-1);
}

.text {
  margin: 0;
  color: #f4f7f7;
  font-size: 34px;
  line-height: 40px;
}

.meta {
  display: flex;
  align-items: center;
  align-self: flex-end;
  flex: none;
  gap: 9px;
  height: 26px;
  color: #9b9fa2;
  font-size: 25px;
  line-height: 26px;
}

.out .meta {
  color: #94b1a4;
}

.row {
  gap: 30px;
}

.out .row {
  gap: 18px;
}

.tucked,
.below {
  flex-direction: column;
}

.tucked {
  width: 605px;
  max-width: 100%;
}

.tucked .text {
  padding-right: 14px;
}

.tucked .meta {
  margin-top: -17px;
}

.below .text {
  padding-right: 6px;
}

.below .meta {
  margin-top: 20px;
}

.ticks {
  margin-bottom: 4px;
  color: #5cc0ea;
}

.emoji {
  margin: 7px 0 4px;
  vertical-align: -16px;
}

.shortcut {
  position: absolute;
  top: 81px;
  right: 0;
  width: 100px;
  height: 100px;
  border: 2px solid rgba(120, 126, 130, 0.3);
  border-radius: 50%;
  background: rgba(10, 16, 20, 0.4);
  color: #5f6365;
}

.jump {
  position: absolute;
  right: 25px;
  bottom: 33px;
  width: 68px;
  height: 68px;
  border-radius: 50%;
  background: #28323a;
  box-shadow: 0 1px 5px rgba(0, 0, 0, 0.4);
  color: #9aa2a7;
}

.composer {
  position: relative;
  display: flex;
  align-items: center;
  flex: none;
  gap: 9px;
  padding: 9px 9px 9px 10px;
}

.field {
  display: flex;
  align-items: center;
  flex: 1;
  box-sizing: border-box;
  min-width: 0;
  height: 100px;
  padding: 0 29px 0 28px;
  border-radius: 50px;
  background: #22272b;
  color: #8f9699;
}

.entry {
  display: flex;
  align-items: center;
  flex: 1;
  min-width: 0;
  margin-left: 30px;
}

.entry::before {
  flex: none;
  width: 4px;
  height: 52px;
  margin-right: -4px;
  background: #2fc66b;
  content: "";
}

.entry input {
  flex: 1;
  width: 100%;
  min-width: 0;
  padding: 0;
  border: 0;
  outline: 0;
  background: none;
  color: #f4f7f7;
  font: 38px/44px Roboto, "Liberation Sans", sans-serif;
}

.entry input::placeholder {
  color: #8a9194;
  opacity: 1;
}

.camera {
  margin-left: 67px;
}

.mic {
  width: 102px;
  height: 102px;
  margin: -1px 0;
  border-radius: 50%;
  background: #24c363;
  color: #0a1014;
}
</style>
